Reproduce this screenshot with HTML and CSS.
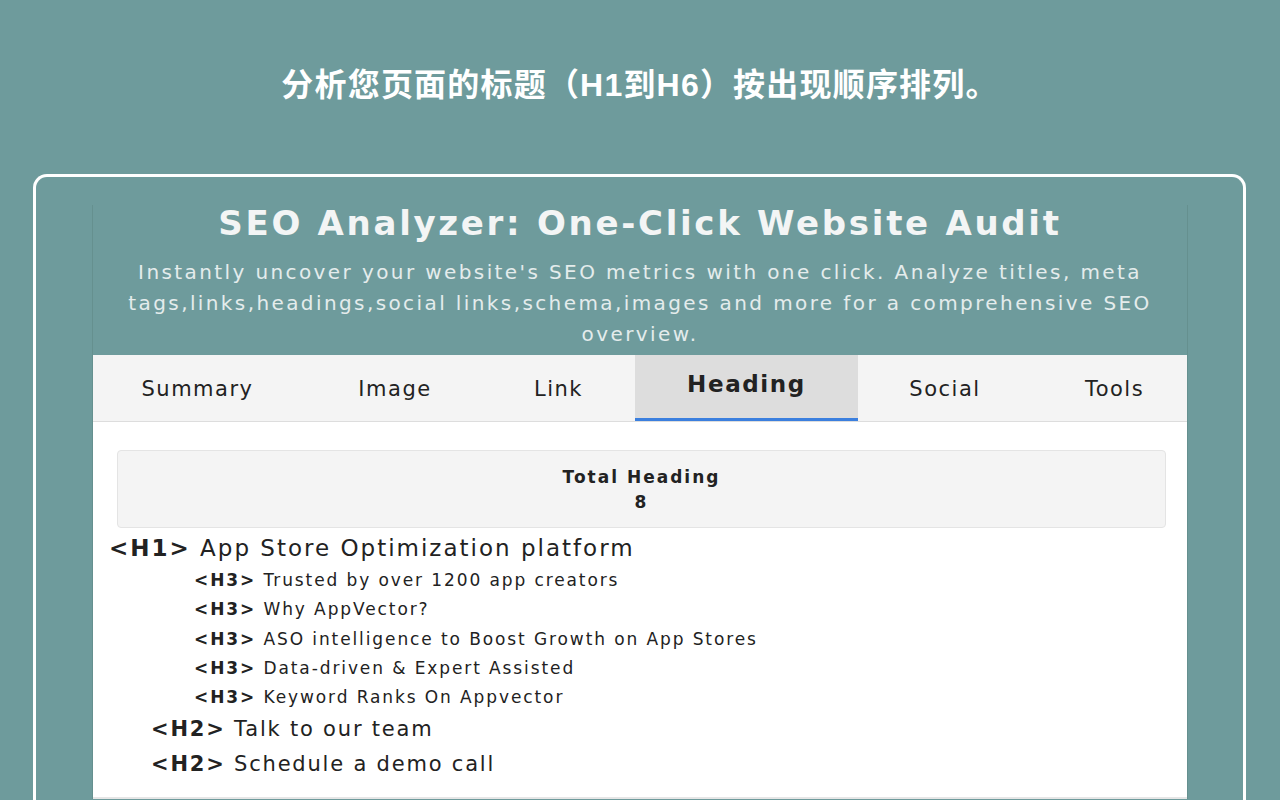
FILE: index.html
```html
<!DOCTYPE html>
<html lang="zh">
<head>
<meta charset="utf-8">
<title>SEO Analyzer</title>
<link rel="stylesheet" href="styles.css">
</head>
<body>
<h1 class="caption">分析您页面的标题（H1到H6）按出现顺序排列。</h1>
<div class="frame">
  <div class="panel">
    <header class="head">
      <h2 class="app-title">SEO Analyzer: One-Click Website Audit</h2>
      <p class="app-desc">Instantly uncover your website's SEO metrics with one click. Analyze titles, meta tags,links,headings,social links,schema,images and more for a comprehensive SEO overview.</p>
    </header>
    <nav class="tabs">
      <div class="tab tab-summary">Summary</div>
      <div class="tab">Image</div>
      <div class="tab tab-link">Link</div>
      <div class="tab active">Heading</div>
      <div class="tab">Social</div>
      <div class="tab tab-tools">Tools</div>
    </nav>
    <section class="content">
      <div class="total">
        <div class="total-label">Total Heading</div>
        <div class="total-num">8</div>
      </div>
      <ul class="hlist">
        <li class="h1"><b>&lt;H1&gt;</b> App Store Optimization platform</li>
        <li class="h3"><b>&lt;H3&gt;</b> Trusted by over 1200 app creators</li>
        <li class="h3"><b>&lt;H3&gt;</b> Why AppVector?</li>
        <li class="h3"><b>&lt;H3&gt;</b> ASO intelligence to Boost Growth on App Stores</li>
        <li class="h3"><b>&lt;H3&gt;</b> Data-driven &amp; Expert Assisted</li>
        <li class="h3"><b>&lt;H3&gt;</b> Keyword Ranks On Appvector</li>
        <li class="h2"><b>&lt;H2&gt;</b> Talk to our team</li>
        <li class="h2"><b>&lt;H2&gt;</b> Schedule a demo call</li>
      </ul>
    </section>
  </div>
</div>
</body>
</html>
```

FILE: styles.css
```css
html, body {
  margin: 0;
  padding: 0;
  height: 800px;
  overflow: hidden;
}
body {
  background: #6e9b9c;
  font-family: "DejaVu Sans", "Liberation Sans", sans-serif;
}
.caption {
  margin: 0;
  padding-top: 65px;
  height: 174px;
  box-sizing: border-box;
  text-align: center;
  color: #ffffff;
  font-family: "Liberation Sans", "Noto Sans CJK SC", sans-serif;
  font-size: 32px;
  font-weight: 700;
  line-height: 40px;
  letter-spacing: 1.2px;
}
.frame {
  margin: 0 34px 0 33px;
  border: 3px solid #ffffff;
  border-bottom: none;
  border-radius: 14px 14px 0 0;
  height: 640px;
  padding-top: 28px;
  box-sizing: border-box;
}
.panel {
  width: 1096px;
  margin-left: 56px;
  border-left: 1px solid #65908f;
  border-right: 1px solid #65908f;
  box-sizing: border-box;
}
.head {
  text-align: center;
  color: #f3f5f5;
  height: 150px;
}
.app-title {
  margin: 0;
  font-size: 34px;
  font-weight: 700;
  line-height: 36px;
  letter-spacing: 2.7px;
}
.app-desc {
  margin: 16px 6px 0;
  font-size: 20px;
  line-height: 31px;
  color: #e4ecec;
  letter-spacing: 2.4px;
}
.tabs {
  display: grid;
  grid-template-columns: 205px 194px 143px 223px 174px 155px;
  height: 66px;
  background: #f4f4f4;
  border-bottom: 1px solid #dddddd;
}
.tab {
  display: flex;
  align-items: center;
  justify-content: center;
  font-size: 21px;
  letter-spacing: 1.5px;
  color: #222222;
  padding-top: 2px;
  box-sizing: border-box;
}
.tab-summary {
  padding-left: 4px;
}
.tab-link {
  padding-right: 10px;
}
.tab-tools {
  padding-left: 10px;
}
.tab.active {
  background: #dddddd;
  font-weight: 700;
  font-size: 23px;
  letter-spacing: 1.6px;
  padding-top: 0;
  padding-bottom: 6px;
  border-bottom: 3px solid #3b7fde;
}
.content {
  background: #ffffff;
  padding: 28px 21px 0 16px;
  height: 377px;
  box-sizing: border-box;
  border-bottom: 2px solid #e6e6e6;
}
.total {
  margin-left: 8px;
  height: 78px;
  box-sizing: border-box;
  background: #f4f4f4;
  border: 1px solid #e4e4e4;
  border-radius: 4px;
  text-align: center;
  padding-top: 14px;
  color: #222222;
  font-weight: 700;
  font-size: 17px;
  letter-spacing: 2px;
  line-height: 25px;
}
.hlist {
  list-style: none;
  margin: 4px 0 0;
  padding: 0;
  color: #222222;
}
.hlist li {
  white-space: nowrap;
}
.h1 {
  font-size: 23px;
  line-height: 32px;
  letter-spacing: 2px;
}
.h3 {
  font-size: 17px;
  line-height: 29.3px;
  padding-left: 85px;
  letter-spacing: 1.9px;
}
.h1 + .h3 {
  margin-top: 2px;
}
.h2 {
  font-size: 21px;
  line-height: 35px;
  padding-left: 42px;
  letter-spacing: 1.8px;
}
```
